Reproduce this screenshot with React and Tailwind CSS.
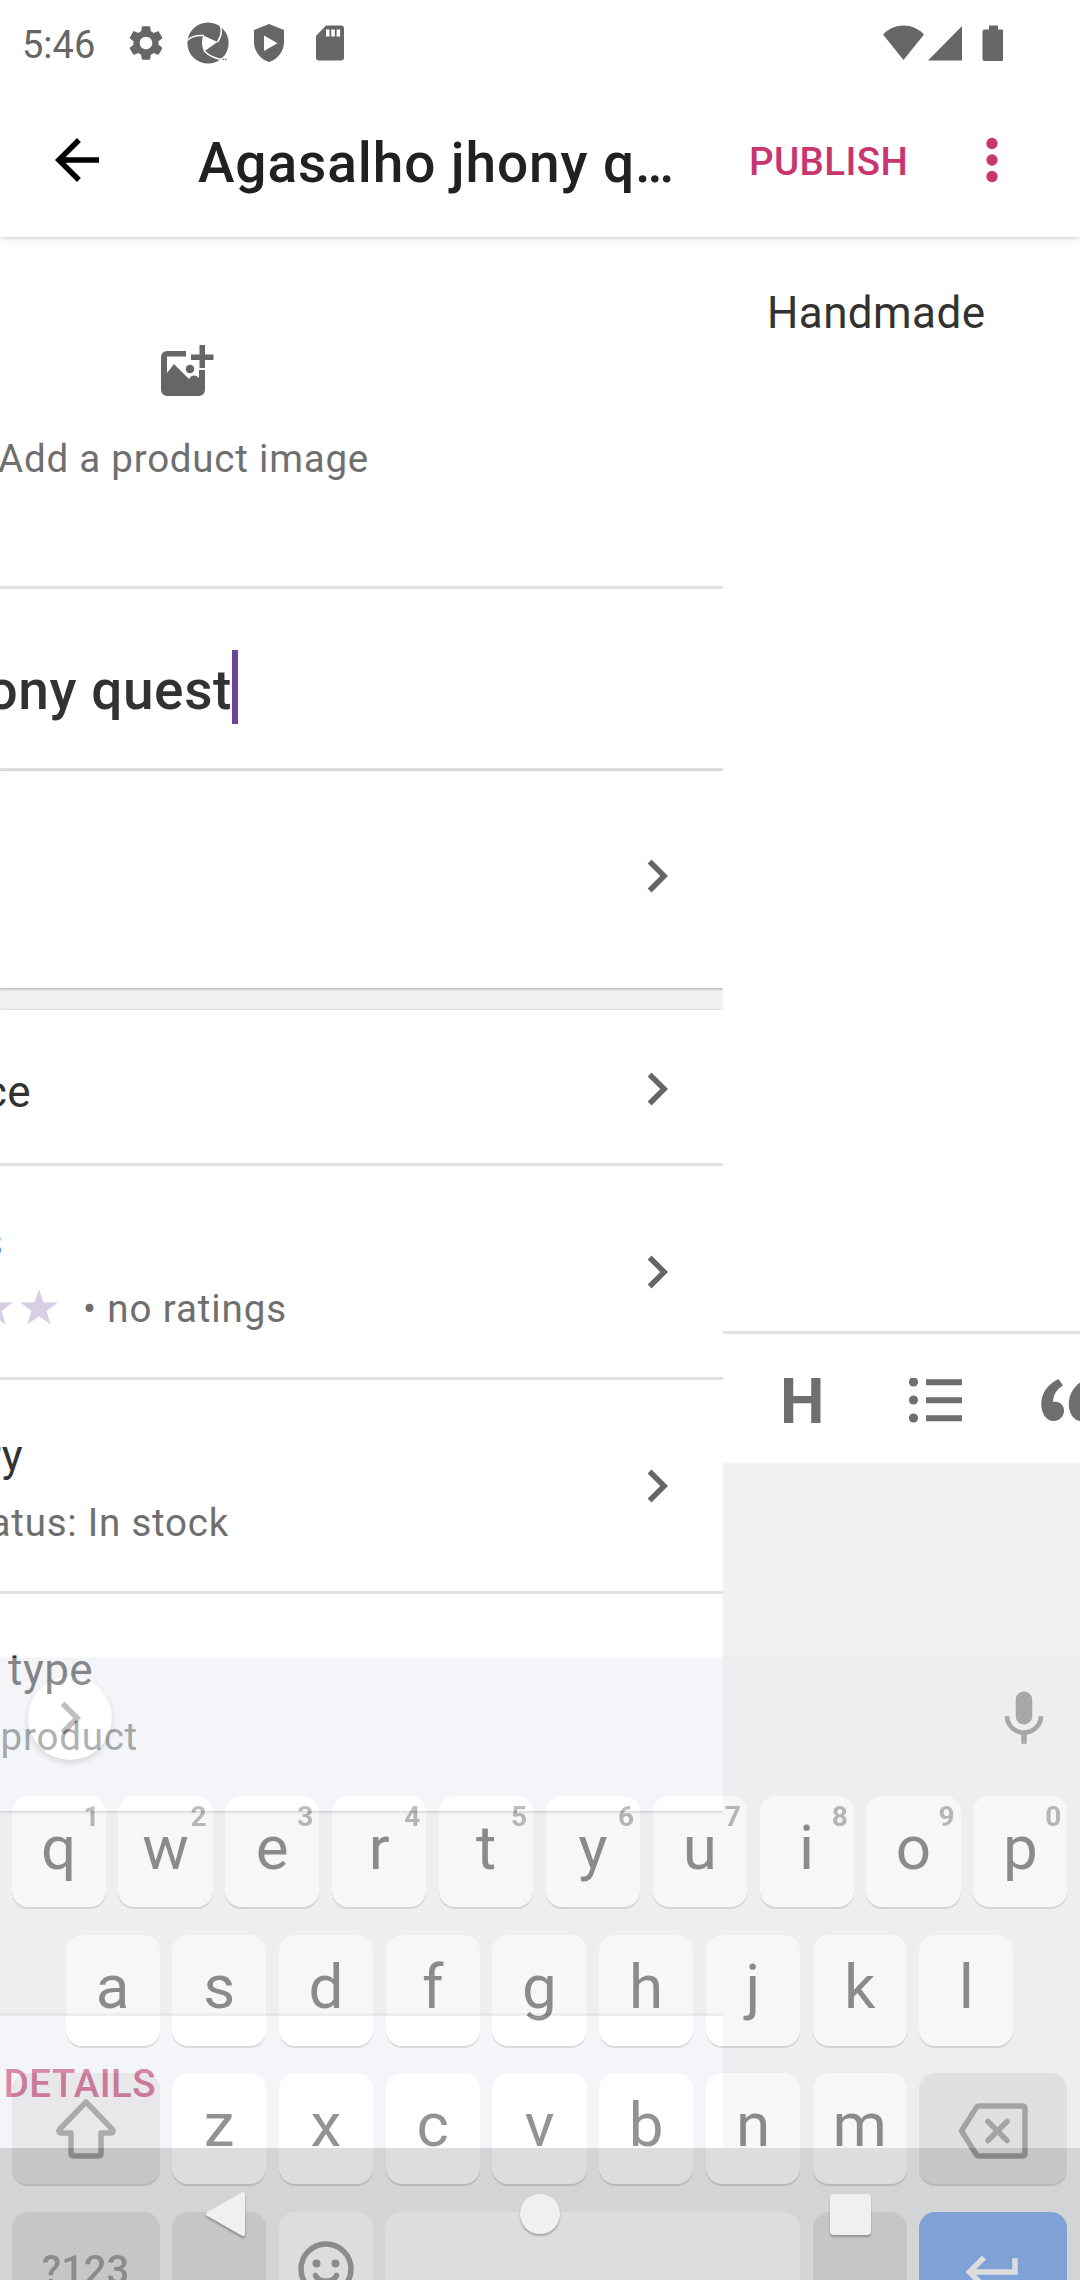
import React from "react";

const Chevron = ({ className = "" }) => (
  <svg viewBox="0 0 24 24" className={"h-[66px] w-[66px] shrink-0 " + className} fill="currentColor">
    <path d="M10 6 8.590 7.410 13.170 12l-4.580 4.590L10 18l6-6z" />
  </svg>
);

function StatusBar() {
  return (
    <div className="flex h-[84px] items-center pt-[2px] text-[#666]">
      <span className="ml-[22px] mt-[4px] w-[107px] text-[38px] leading-[44px]">5:46</span>
      <svg viewBox="0 0 24 24" className="-ml-[4px] h-[42px] w-[42px]" fill="currentColor">
        <path d="M19.14 12.94c.04-.3.06-.61.06-.94 0-.32-.02-.64-.07-.94l2.03-1.58c.18-.14.23-.41.12-.61l-1.92-3.32c-.12-.22-.37-.29-.59-.22l-2.39.96c-.5-.38-1.03-.7-1.62-.94l-.36-2.54c-.04-.24-.24-.41-.48-.41h-3.84c-.24 0-.43.17-.47.41l-.36 2.54c-.59.24-1.13.57-1.62.94l-2.39-.96c-.22-.08-.47 0-.59.22L2.74 8.87c-.12.21-.08.47.12.61l2.03 1.58c-.05.3-.09.63-.09.94s.02.64.07.94l-2.03 1.58c-.18.14-.23.41-.12.61l1.92 3.32c.12.22.37.29.59.22l2.39-.96c.5.38 1.03.7 1.62.94l.36 2.54c.05.24.24.41.48.41h3.84c.24 0 .44-.17.47-.41l.36-2.54c.59-.24 1.13-.56 1.62-.94l2.39.96c.22.08.47 0 .59-.22l1.92-3.32c.12-.22.07-.47-.12-.61zM12 15.6c-1.98 0-3.6-1.62-3.6-3.6s1.62-3.6 3.6-3.6 3.6 1.62 3.6 3.6-1.62 3.6-3.6 3.6z" />
      </svg>
      <svg viewBox="0 0 42 42" className="ml-[20px] h-[42px] w-[42px]">
        <circle cx="21" cy="21" r="20.6" fill="currentColor" />
        <path d="M16.3 13.500 30.500 20 17 29.500C14.600 24 14.300 19 16.300 13.500z" fill="#fff" />
        <path d="M0 18.500Q6 12.500 17 13.600M33.500 4Q36 12 30.500 20.200M38 38Q25 37 17 28.800" fill="none" stroke="#fff" strokeWidth="1.500" />
        <path d="M34 36.500 42 32V42H31z" fill="#fff" />
        <path d="M35.500 37.300h1.800M38 37.300h1.500" stroke="currentColor" strokeWidth="1.200" />
      </svg>
      <svg viewBox="0 0 32 40" className="ml-[24px] h-[40px] w-[32px]">
        <path d="M16 1 31 7v12c0 9-6 17-15 20C7 36 1 28 1 19V7z" fill="currentColor" />
        <path d="M11 12.500v15.500l13.500-7.700z" fill="#fff" />
      </svg>
      <svg viewBox="0 0 28 36" className="ml-[31px] h-[36px] w-[28px]">
        <path d="M10 .5h15a3 3 0 0 1 3 3v29a3 3 0 0 1-3 3H3a3 3 0 0 1-3-3V11z" fill="currentColor" />
        <path d="M10 4.500h3.500v7H10zM15.300 4.500h3.500v7h-3.500zM20.600 4.500h3.500v7h-3.500z" fill="#fff" />
      </svg>
      <svg viewBox="0 0 120 36" className="ml-auto mr-[77px] h-[36px] w-[120px]" fill="currentColor">
        <path d="M0 9.500Q8.500.5 20.500.5T41 9.500L20.500 35zM79 1v34.500H45zM106 4.500V.5h9v4h3.500a2 2 0 0 1 2 2V34a2 2 0 0 1-2 2h-17a2 2 0 0 1-2-2V6.500a2 2 0 0 1 2-2z" />
      </svg>
    </div>
  );
}

function AppBar() {
  return (
    <div className="flex h-[153px] items-center pb-[1px]">
      <svg viewBox="0 0 24 24" className="ml-[44px] h-[66px] w-[66px]" fill="#000">
        <path d="M20 11H7.830l5.590-5.590L12 4l-8 8 8 8 1.410-1.410L7.830 13H20z" />
      </svg>
      <h1 className="ml-[88px] mt-[5px] w-[551px] text-[55px] font-medium leading-[64px] tracking-[0.900px] text-[#212121]">Agasalho jhony q…</h1>
      <span className="mt-[3px] w-[210px] text-[38.500px] font-medium leading-[44px] tracking-[0.400px] text-[#c9356e]">PUBLISH</span>
      <svg viewBox="0 0 24 24" className="h-[66px] w-[66px]" fill="#c9356e">
        <circle cx="12" cy="6" r="2.050" /><circle cx="12" cy="12" r="2.050" /><circle cx="12" cy="18" r="2.050" />
      </svg>
    </div>
  );
}

const Clip = ({ w, children }) => (
  <div className="flex justify-end overflow-hidden whitespace-nowrap" style={{ width: w }}>{children}</div>
);

const Title = ({ w, children }) => (
  <Clip w={w}><span className="text-[44px] leading-[66px] tracking-[0.410px] text-[#323232]">{children}</span></Clip>
);
const Sub = ({ w, children }) => (
  <Clip w={w}><span className="text-[38.500px] leading-[67px] tracking-[0.780px] text-[#6f6f6f]">{children}</span></Clip>
);

const Star = () => (
  <svg viewBox="0 0 38 36" className="h-[36px] w-[38px] shrink-0" fill="#d9cfe5">
    <path d="m19 0 4.500 13.300H38L26.500 22l4.300 13.500L19 27.300 7.200 35.500 11.500 22 0 13.300h14.500z" />
  </svg>
);

function Row({ children, className = "" }) {
  return (
    <div className={"flex items-center justify-between bg-white pr-[33px] " + className}>
      <div className="flex flex-col">{children}</div>
      <Chevron className="text-[#666]" />
    </div>
  );
}

function ProductPane() {
  return (
    <div className="h-[1911px] w-[723px] overflow-hidden bg-[#f1f1f1]">
      <div className="flex h-[352px] flex-col border-b-3 border-[#e1e1e1] bg-white pt-[105px]">
        <svg viewBox="0 0 54 56" className="ml-[160px] h-[56px] w-[54px]" fill="#666">
          <path d="M26 12H7a6 6 0 0 0-6 6v33a6 6 0 0 0 6 6h32a6 6 0 0 0 6-6V31h-6v8c-3-3-7-4-10 1L14 25l-7 9V17.500h19z" transform="translate(0 -3)" />
          <circle cx="30" cy="27" r="4.300" />
          <path d="M39.500 3H45v9.500h8.500V18H45v8h-5.500v-8H31v-5.500h8.500z" />
        </svg>
        <Clip w={369}><span className="mt-[38px] text-[38.500px] leading-[46px] tracking-[0.780px] text-[#6f6f6f]">Add a product image</span></Clip>
      </div>
      <div className="flex h-[182px] items-center border-b-3 border-[#e1e1e1] bg-white pt-[17px]">
        <Clip w={232}><span className="pt-[6px] text-[55px] font-medium leading-[74px] tracking-[0.600px] text-[#323232]">ony quest</span></Clip>
        <div className="h-[74px] w-[6px] bg-[#6b4699]" />
      </div>
      <div className="relative z-10 flex h-[217px] items-center justify-end bg-white pb-[7px] pr-[33px] shadow-[0_1px_3px_rgba(0,0,0,0.3)]">
        <Chevron className="text-[#666]" />
      </div>
      <div className="mt-[22px] shadow-[0_1px_3px_rgba(0,0,0,0.3)]">
        <Row className="h-[156px] border-b-3 border-[#e1e1e1] pt-[4px]"><div className="pt-[6px]"><Title w={31}>ce</Title></div></Row>
        <Row className="h-[214px] border-b-3 border-[#e1e1e1]">
          <div className="pt-[8px]"><Title w={3}>s</Title></div>
          <div className="flex items-center">
            <div className="-mt-[3px] flex w-[58px] justify-end gap-[7.500px] overflow-hidden"><Star /><Star /></div>
            <span className="ml-[25px] text-[38.500px] leading-[67px] tracking-[0.900px] text-[#6f6f6f]">• no ratings</span>
          </div>
        </Row>
        <Row className="h-[214px] border-b-3 border-[#e1e1e1]">
          <div className="pt-[8px]"><Title w={23}>ry</Title></div>
          <Sub w={229}>atus: In stock</Sub>
        </Row>
        <div className="flex h-[217px] flex-col bg-white pt-[43px]">
          <Title w={93}>type</Title>
          <Sub w={138}>product</Sub>
        </div>
      </div>
      <div className="mt-[202px] flex h-[135px] border-t-3 border-[#e1e1e1] bg-white pt-[46px]">
        <Clip w={156}><span className="text-[38.500px] font-medium leading-[44px] tracking-[0.400px] text-[#c9356e]">DETAILS</span></Clip>
      </div>
    </div>
  );
}

function EditorPane() {
  return (
    <div className="flex h-[1911px] flex-1 flex-col overflow-hidden bg-[#f1f1f1]">
      <div className="h-[1094px] bg-white pl-[44px] pt-[50px] text-[44px] leading-[52px] tracking-[0.410px] text-[#323232]">Handmade</div>
      <div className="flex h-[132px] shrink-0 border-t-3 border-[#e1e1e1] bg-white pt-[44px] text-[#6f6f6f]">
        <span className="ml-[57px] w-[128px] shrink-0 pt-[1px] text-[63px] font-bold leading-[46px]">H</span>
        <svg viewBox="0 0 54 46" className="h-[46px] w-[54px] shrink-0" fill="currentColor">
          <circle cx="5.500" cy="4" r="4.600" /><circle cx="5.500" cy="22" r="4.600" /><circle cx="5.500" cy="40" r="4.600" />
          <path d="M18 1.200h36v6H18zM18 19.200h36v6H18zM18 37.200h36v6H18z" />
        </svg>
        <svg viewBox="0 0 54 44" className="ml-[79px] h-[44px] w-[54px] shrink-0" fill="currentColor">
          <path d="M17.500 1l4.500 6.500C16 11 12.500 16 12 24c6-1.500 11 2.500 11 8.500 0 6-4.500 10.500-10.500 10.500C5 43 .3 35 .3 26 .3 15 7 6 17.500 1z" />
          <path d="M45 1l4.500 6.500C43.500 11 40 16 39.500 24c6-1.500 11 2.500 11 8.500 0 6-4.500 10.500-10.500 10.500-7.500 0-12.200-8-12.200-17C27.800 15 34.500 6 45 1z" />
        </svg>
      </div>
    </div>
  );
}

const keyBase = "flex h-[111px] shrink-0 items-center justify-center rounded-[16px] shadow-[0_2px_0_#b0b1b3] ";

const Key = ({ c, hint }) => (
  <div className={keyBase + "relative w-[94.200px] bg-white text-[62px] text-[#111]"}>
    <span className="pb-[7px] leading-[74px]">{c}</span>
    {hint && <span className="absolute right-[6px] top-[5px] text-[28px] font-bold leading-[32px] text-[#6e6e6e]">{hint}</span>}
  </div>
);

function Keyboard() {
  return (
    <div className="absolute inset-x-0 top-[1658px] flex h-[622px] flex-col bg-[#e8ebf0] opacity-45 shadow-[0_-1px_3px_rgba(0,0,0,0.08)]">
      <div className="flex h-[138px] shrink-0 items-start justify-between pl-[28px] pr-[23px] pt-[18px]">
        <div className="flex h-[84px] w-[84px] items-center justify-center rounded-full bg-white shadow-[0_3px_6px_rgba(0,0,0,0.3)]">
          <Chevron className="text-[#737373]" />
        </div>
        <svg viewBox="0 0 24 24" className="mt-[10px] h-[66px] w-[66px]" fill="#4f4f4f">
          <path d="M12 14c1.660 0 3-1.340 3-3V5c0-1.660-1.340-3-3-3S9 3.340 9 5v6c0 1.660 1.340 3 3 3zm5.300-3c0 3-2.540 5.100-5.300 5.100S6.700 14 6.700 11H5c0 3.410 2.720 6.230 6 6.720V21h2v-3.280c3.280-.48 6-3.300 6-6.720h-1.700z" />
        </svg>
      </div>
      <div className="flex flex-col gap-[27.500px] pl-[11.500px] pr-[12.500px]">
        <div className="flex justify-between">
          {[..."qwertyuiop"].map((c, i) => <Key key={c} c={c} hint={String((i + 1) % 10)} />)}
        </div>
        <div className="flex justify-between px-[54px]">
          {[..."asdfghjkl"].map((c) => <Key key={c} c={c} />)}
        </div>
        <div className="flex justify-between">
          <div className={keyBase + "w-[148px] bg-[#cdcdd1]"}>
            <svg viewBox="0 0 62 62" className="h-[62px] w-[62px]" fill="none" stroke="#474747" strokeWidth="5.500" strokeLinejoin="round">
              <path d="M31 4 5 31c-2 2-1 4 1 4h10v20q0 3 3 3h24q3 0 3-3V35h10c2 0 3-2 1-4z" />
            </svg>
          </div>
          {[..."zxcvbnm"].map((c) => <Key key={c} c={c} />)}
          <div className={keyBase + "w-[148px] bg-[#cdcdd1]"}>
            <svg viewBox="0 0 70 56" className="mt-[5px] h-[56px] w-[70px]" fill="none" stroke="#474747" strokeWidth="5.500" strokeLinejoin="round" strokeLinecap="round">
              <path d="M21 3h43q3 0 3 3v44q0 3-3 3H21q-2 0-3-2L3.500 28 18 5q1-2 3-2zM30 18.500l19 19M49 18.500l-19 19" />
            </svg>
          </div>
        </div>
        <div className="flex justify-between">
          <div className={keyBase + "w-[148px] bg-[#cdcdd1] pt-[7px] text-[40px] font-medium text-[#4b4b4b]"}>?123</div>
          <div className={keyBase + "w-[94.200px] bg-[#cdcdd1]"} />
          <div className={keyBase + "w-[94.200px] bg-white"}>
            <svg viewBox="0 0 56 56" className="mt-[4px] h-[56px] w-[56px]" fill="none" stroke="#4b4b4b" strokeWidth="5.500">
              <circle cx="28" cy="28" r="25" />
              <circle cx="18.500" cy="22.500" r="4" fill="#4b4b4b" stroke="none" /><circle cx="37.500" cy="22.500" r="4" fill="#4b4b4b" stroke="none" />
              <path d="M17.500 34.500c4 7.500 17 7.500 21 0" strokeLinecap="round" />
            </svg>
          </div>
          <div className={keyBase + "w-[415px] bg-white"} />
          <div className={keyBase + "w-[94.200px] bg-[#cdcdd1]"} />
          <div className={keyBase + "w-[148px] bg-[#2f7cf0]"}>
            <svg viewBox="0 0 24 24" className="mt-[9px] h-[66px] w-[66px]" fill="#fff">
              <path d="M19 7v4H5.830l3.580-3.590L8 6l-6 6 6 6 1.410-1.410L5.830 13H21V7z" />
            </svg>
          </div>
        </div>
      </div>
    </div>
  );
}

function NavButtons() {
  return (
    <div className="absolute inset-x-0 bottom-0 flex h-[132px] items-center justify-between pl-[205px] pr-[209px]">
      <svg viewBox="0 0 42 48" className="mt-[2px] h-[48px] w-[42px] drop-shadow-[0_2px_1px_rgba(0,0,0,0.3)]">
        <path d="M38 3v40L3 23z" fill="#f0f0f0" stroke="#f0f0f0" strokeWidth="4" strokeLinejoin="round" />
      </svg>
      <div className="ml-[3px] h-[40px] w-[40px] rounded-full bg-[#f0f0f0] shadow-[0_2px_2px_rgba(0,0,0,0.25)]" />
      <div className="h-[41px] w-[41px] rounded-[4px] bg-[#f0f0f0] shadow-[0_2px_2px_rgba(0,0,0,0.25)]" />
    </div>
  );
}

export default function App() {
  return (
    <div className="relative h-[2280px] w-[1080px] overflow-hidden bg-[#c1c1c1] font-['Roboto',sans-serif]">
      <header className="relative z-10 bg-white shadow-[0_1px_3px_rgba(0,0,0,0.12),0_2px_12px_rgba(0,0,0,0.08)]">
        <StatusBar />
        <AppBar />
      </header>
      <main className="flex">
        <ProductPane />
        <EditorPane />
      </main>
      <Keyboard />
      <NavButtons />
    </div>
  );
}
